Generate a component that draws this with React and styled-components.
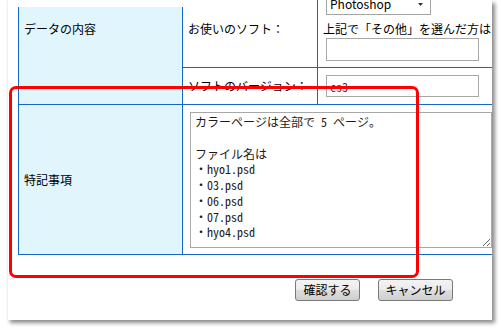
import styled, { createGlobalStyle } from "styled-components";

const GlobalStyle = createGlobalStyle`
  html, body {
    margin: 0;
    padding: 0;
    background: #ffffff;
  }
  body {
    font-family: "Noto Sans CJK JP", "Noto Sans", sans-serif;
    font-size: 12px;
    color: #000000;
  }
`;

const Page = styled.div`
  position: relative;
  width: 500px;
  height: 330px;
  overflow: hidden;
`;

const Panel = styled.div`
  position: relative;
  margin-left: 7px;
  width: 485px;
  height: 320px;
  box-sizing: border-box;
  background: #ffffff;
  border-left: 1px solid #f0f0f0;
  box-shadow: 3px 3px 4px rgba(0, 0, 0, 0.45);
  overflow: hidden;
`;

/* torn top edge of the captured page */
const TopFade = styled.div`
  position: absolute;
  left: 0;
  top: 0;
  width: 309px;
  height: 7px;
  background: #ffffff;
  z-index: 2;
`;

const FormGrid = styled.div`
  display: grid;
  grid-template-columns: 164px 135px 220px;
  grid-template-rows: 78px 37px 150px;
  margin: -10px 0 0 10px;
  border-left: 1px solid #1467c9;
`;

const Cell = styled.div`
  box-sizing: border-box;
  border-right: 1px solid #1467c9;
  border-bottom: 1px solid #1467c9;
  line-height: 16px;
`;

const HeadCell = styled(Cell)`
  background: #e1f5fd;
  padding: ${(p) => (p.$top ? "31px 0 0 5px" : "0 0 0 5px")};
  grid-row: ${(p) => (p.$span ? `span ${p.$span}` : "auto")};
  display: flex;
  align-items: ${(p) => (p.$top ? "flex-start" : "center")};
`;

const LabelCell = styled(Cell)`
  display: flex;
  align-items: center;
  padding-left: 5px;
  white-space: nowrap;
`;

const FieldCell = styled(Cell)`
  display: flex;
  flex-direction: column;
  align-items: flex-start;
  padding: ${(p) => (p.$pad ? `${p.$pad}px` : "0")} 0 0 5px;
  white-space: nowrap;
`;

const WideCell = styled(Cell)`
  grid-column: span 2;
  padding: 7px 0 0 7px;
`;

const SelectWrap = styled.div`
  position: relative;
  margin-left: 3px;
`;

const Select = styled.select`
  appearance: none;
  display: block;
  width: 105px;
  height: 22px;
  box-sizing: border-box;
  border: 1px solid #a5a5a5;
  background: #ffffff;
  font: inherit;
  font-size: 12px;
  padding: 0 0 0 3px;
  color: #000;
`;

const Caret = styled.svg`
  position: absolute;
  right: 8px;
  top: 10px;
  pointer-events: none;
`;

const Note = styled.div`
  margin-top: 6px;
  line-height: 16px;
`;

const TextInput = styled.input`
  margin: ${(p) => (p.$gap ? `${p.$gap}px` : "0")} 0 0 3px;
  width: 153px;
  height: ${(p) => p.$h || 23}px;
  box-sizing: border-box;
  border: 1px solid #a8a8a8;
  padding: 0 3px;
  font-family: "Noto Sans Mono CJK JP", "Noto Sans CJK JP", monospace;
  font-size: 12px;
  color: #3a2a86;
  outline: none;
`;

const Memo = styled.textarea`
  display: block;
  width: 302px;
  height: 136px;
  box-sizing: border-box;
  margin: 0;
  border: 1px solid #a8a8a8;
  padding: 1px 4px;
  font-family: "Noto Sans Mono CJK JP", "Noto Sans CJK JP", monospace;
  font-size: 12px;
  line-height: 15.75px;
  color: #1a1a1a;
  background: #ffffff;
  outline: none;
  overflow: hidden;
`;

const Actions = styled.div`
  display: flex;
  gap: 18px;
  margin-top: 24px;
  padding-left: 287px;
`;

const Button = styled.button`
  height: 22px;
  width: ${(p) => p.$w}px;
  box-sizing: border-box;
  padding: 0;
  border: 1px solid #7a7a7a;
  border-radius: 3px;
  background: linear-gradient(#f3f3f3 0%, #ebebeb 48%, #dddddd 52%, #cfcfcf 100%);
  font-family: "Noto Sans CJK JP", sans-serif;
  font-size: 12px;
  color: #000;
  line-height: 20px;
`;

/* red annotation frame drawn over the capture */
const Highlight = styled.div`
  position: absolute;
  left: 9px;
  top: 86px;
  width: 410px;
  height: 192px;
  box-sizing: border-box;
  border: 3px solid #ff0000;
  border-radius: 7px;
  pointer-events: none;
  z-index: 5;
`;

const memoText = `カラーページは全部で 5 ページ。

ファイル名は
・hyo1.psd
・03.psd
・06.psd
・07.psd
・hyo4.psd`;

export default function App() {
  return (
    <Page>
      <GlobalStyle />
      <Panel>
        <TopFade />
        <FormGrid>
          <HeadCell $span={2} $top>データの内容</HeadCell>
          <LabelCell>お使いのソフト：</LabelCell>
          <FieldCell $pad={3}>
            <SelectWrap>
              <Select defaultValue="Photoshop">
                <option>Photoshop</option>
              </Select>
              <Caret width="5" height="3" viewBox="0 0 5 3">
                <path d="M0 0h5L2.5 3z" fill="#333" />
              </Caret>
            </SelectWrap>
            <Note>上記で「その他」を選んだ方は</Note>
            <TextInput $gap={1} readOnly defaultValue="" />
          </FieldCell>
          <LabelCell>ソフトのバージョン：</LabelCell>
          <FieldCell $pad={7}>
            <TextInput $h={22} readOnly defaultValue="cs3" />
          </FieldCell>
          <HeadCell>特記事項</HeadCell>
          <WideCell>
            <Memo readOnly defaultValue={memoText} />
          </WideCell>
        </FormGrid>
        <Actions>
          <Button $w={65}>確認する</Button>
          <Button $w={75}>キャンセル</Button>
        </Actions>
      </Panel>
      <Highlight />
    </Page>
  );
}
